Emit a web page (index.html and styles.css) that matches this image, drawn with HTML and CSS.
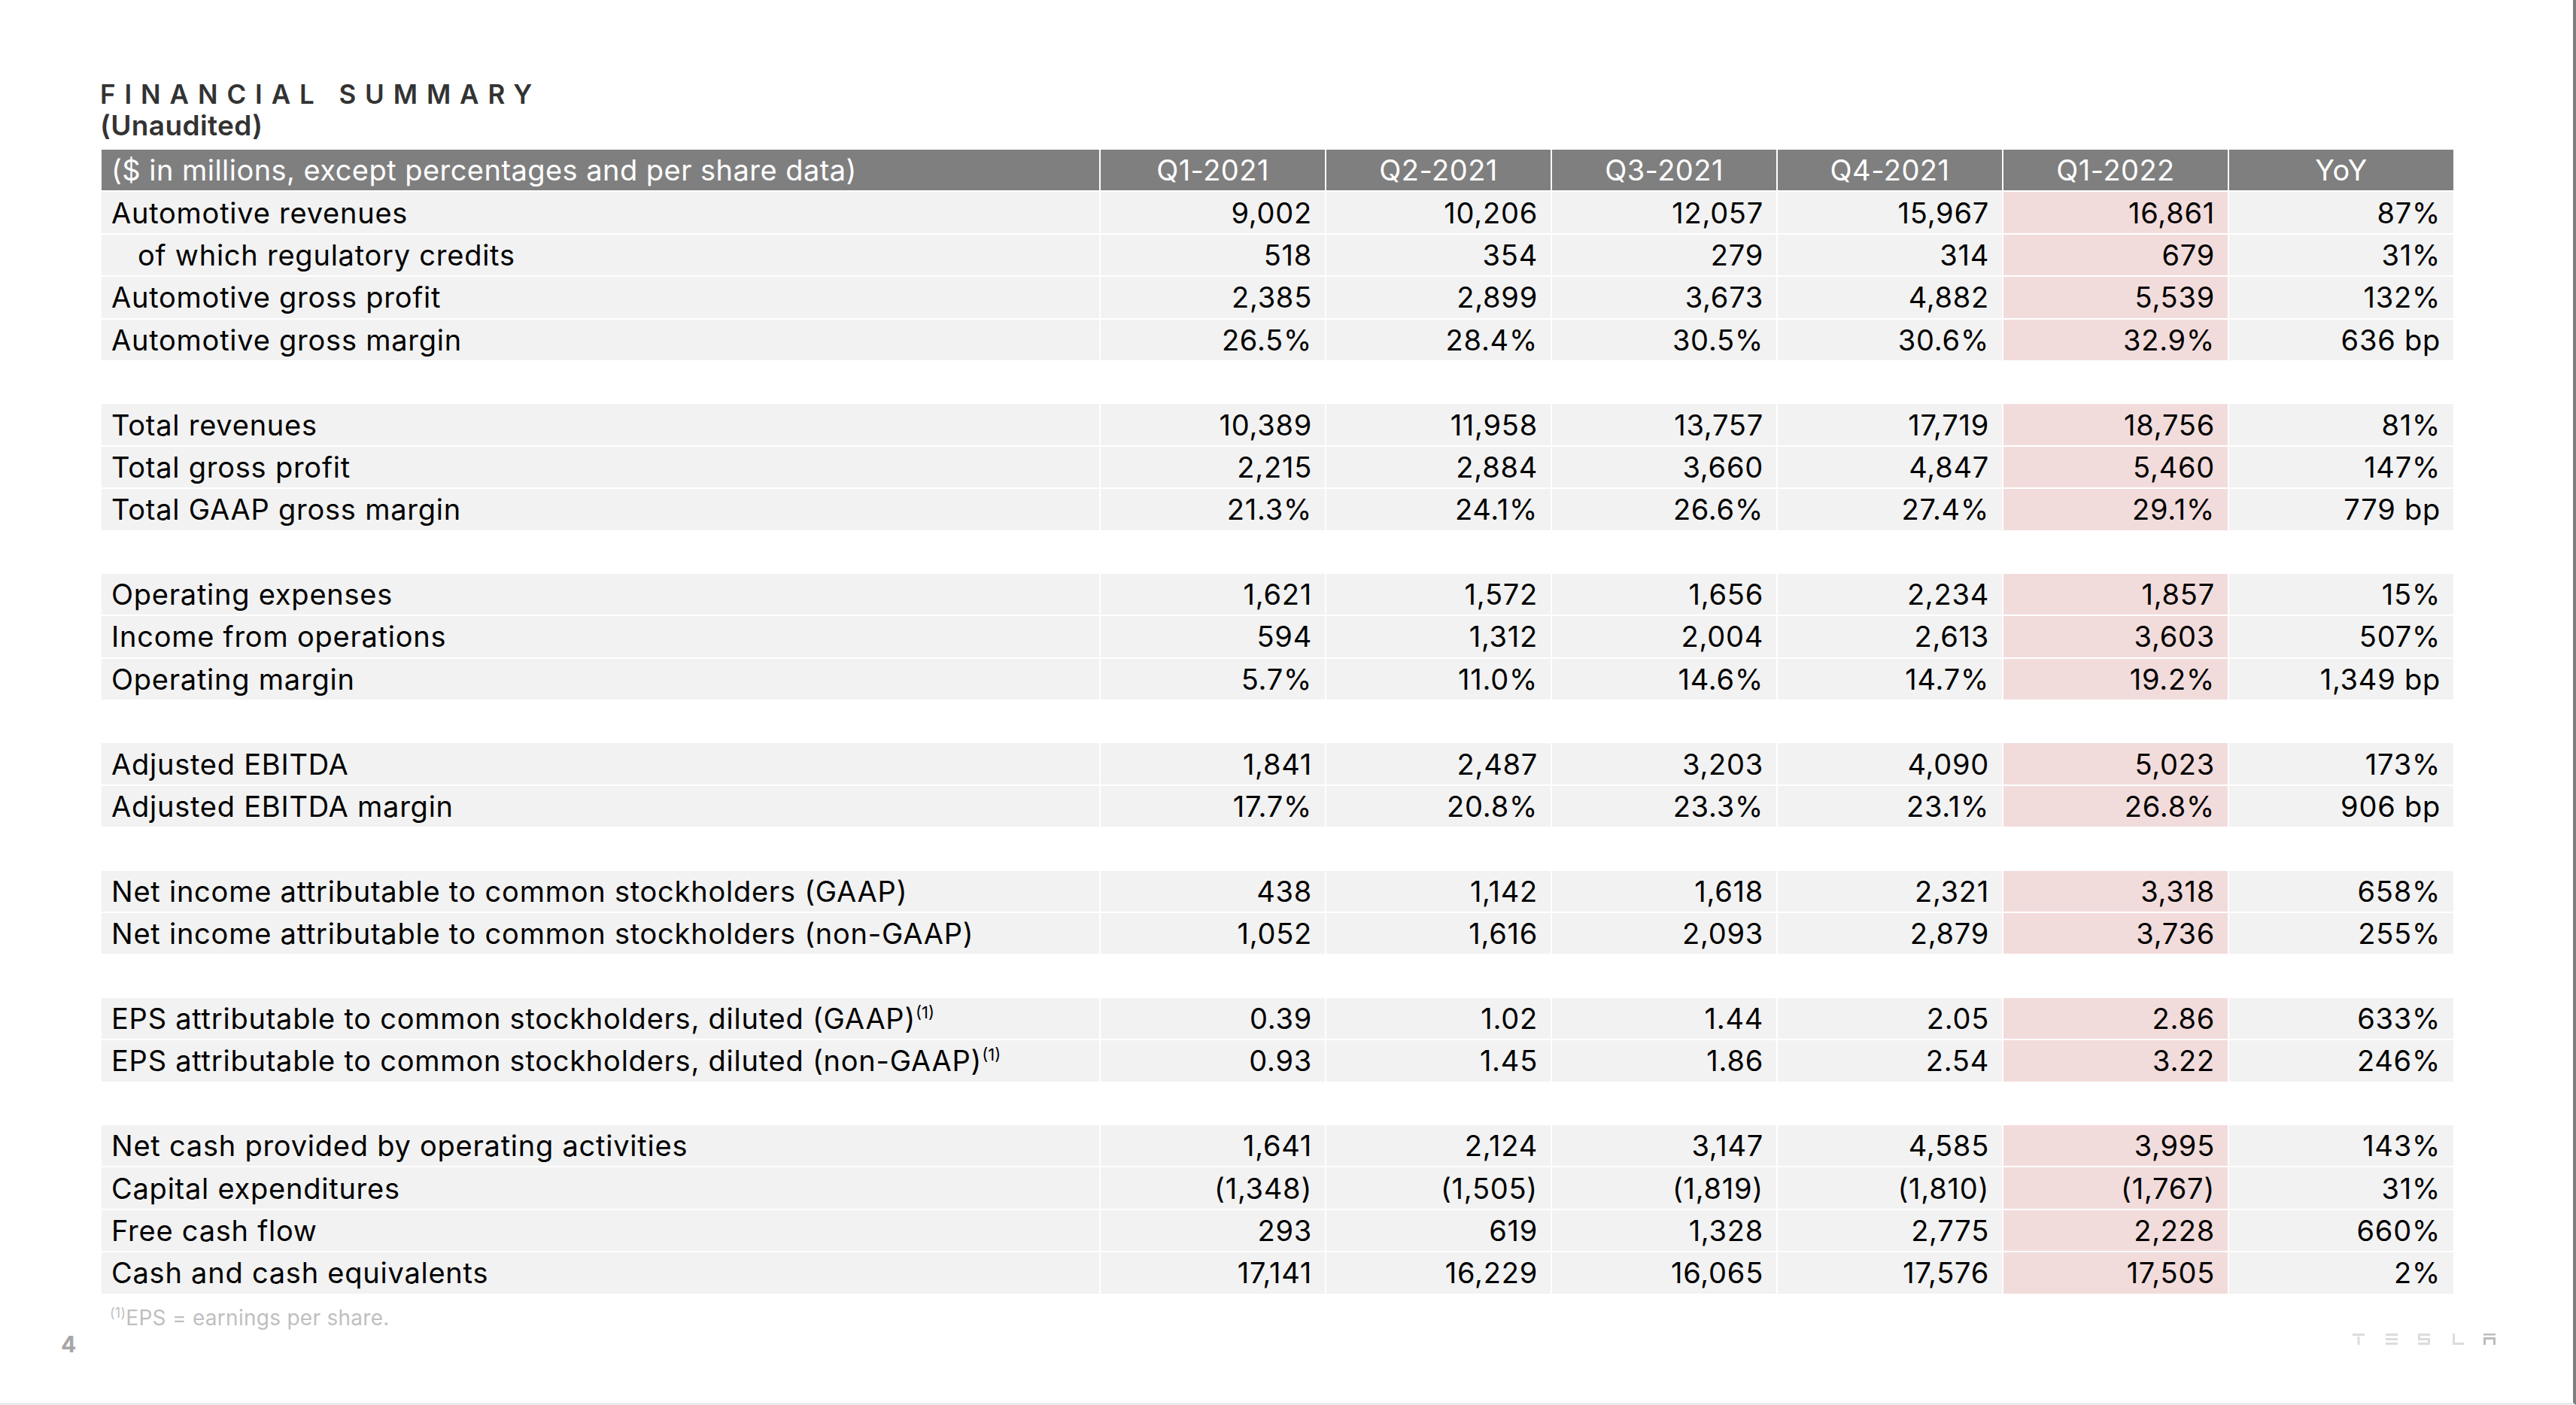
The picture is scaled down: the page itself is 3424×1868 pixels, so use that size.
FILE: index.html
```html
<!DOCTYPE html>
<html lang="en">
<head>
<meta charset="utf-8">
<title>Financial Summary</title>
<link rel="stylesheet" href="styles.css">
</head>
<body>
<div class="slide">
  <main class="main">
    <h1 class="title">FINANCIAL SUMMARY</h1>
    <div class="subtitle">(Unaudited)</div>

    <div class="table">
      <div class="row head">
        <div class="cell label">($ in millions, except percentages and per share data)</div>
        <div class="cell">Q1-2021</div>
        <div class="cell">Q2-2021</div>
        <div class="cell">Q3-2021</div>
        <div class="cell">Q4-2021</div>
        <div class="cell">Q1-2022</div>
        <div class="cell">YoY</div>
      </div>

      <div class="row"><div class="cell label">Automotive revenues</div><div class="cell">9,002</div><div class="cell">10,206</div><div class="cell">12,057</div><div class="cell">15,967</div><div class="cell hl">16,861</div><div class="cell">87%</div></div>
      <div class="row"><div class="cell label indent">of which regulatory credits</div><div class="cell">518</div><div class="cell">354</div><div class="cell">279</div><div class="cell">314</div><div class="cell hl">679</div><div class="cell">31%</div></div>
      <div class="row"><div class="cell label">Automotive gross profit</div><div class="cell">2,385</div><div class="cell">2,899</div><div class="cell">3,673</div><div class="cell">4,882</div><div class="cell hl">5,539</div><div class="cell">132%</div></div>
      <div class="row"><div class="cell label">Automotive gross margin</div><div class="cell">26.5%</div><div class="cell">28.4%</div><div class="cell">30.5%</div><div class="cell">30.6%</div><div class="cell hl">32.9%</div><div class="cell">636 bp</div></div>
      <div class="row spacer"></div>

      <div class="row"><div class="cell label">Total revenues</div><div class="cell">10,389</div><div class="cell">11,958</div><div class="cell">13,757</div><div class="cell">17,719</div><div class="cell hl">18,756</div><div class="cell">81%</div></div>
      <div class="row"><div class="cell label">Total gross profit</div><div class="cell">2,215</div><div class="cell">2,884</div><div class="cell">3,660</div><div class="cell">4,847</div><div class="cell hl">5,460</div><div class="cell">147%</div></div>
      <div class="row"><div class="cell label">Total GAAP gross margin</div><div class="cell">21.3%</div><div class="cell">24.1%</div><div class="cell">26.6%</div><div class="cell">27.4%</div><div class="cell hl">29.1%</div><div class="cell">779 bp</div></div>
      <div class="row spacer"></div>

      <div class="row"><div class="cell label">Operating expenses</div><div class="cell">1,621</div><div class="cell">1,572</div><div class="cell">1,656</div><div class="cell">2,234</div><div class="cell hl">1,857</div><div class="cell">15%</div></div>
      <div class="row"><div class="cell label">Income from operations</div><div class="cell">594</div><div class="cell">1,312</div><div class="cell">2,004</div><div class="cell">2,613</div><div class="cell hl">3,603</div><div class="cell">507%</div></div>
      <div class="row"><div class="cell label">Operating margin</div><div class="cell">5.7%</div><div class="cell">11.0%</div><div class="cell">14.6%</div><div class="cell">14.7%</div><div class="cell hl">19.2%</div><div class="cell">1,349 bp</div></div>
      <div class="row spacer"></div>

      <div class="row"><div class="cell label">Adjusted EBITDA</div><div class="cell">1,841</div><div class="cell">2,487</div><div class="cell">3,203</div><div class="cell">4,090</div><div class="cell hl">5,023</div><div class="cell">173%</div></div>
      <div class="row"><div class="cell label">Adjusted EBITDA margin</div><div class="cell">17.7%</div><div class="cell">20.8%</div><div class="cell">23.3%</div><div class="cell">23.1%</div><div class="cell hl">26.8%</div><div class="cell">906 bp</div></div>
      <div class="row spacer"></div>

      <div class="row"><div class="cell label">Net income attributable to common stockholders (GAAP)</div><div class="cell">438</div><div class="cell">1,142</div><div class="cell">1,618</div><div class="cell">2,321</div><div class="cell hl">3,318</div><div class="cell">658%</div></div>
      <div class="row"><div class="cell label">Net income attributable to common stockholders (non-GAAP)</div><div class="cell">1,052</div><div class="cell">1,616</div><div class="cell">2,093</div><div class="cell">2,879</div><div class="cell hl">3,736</div><div class="cell">255%</div></div>
      <div class="row spacer"></div>

      <div class="row"><div class="cell label">EPS attributable to common stockholders, diluted (GAAP)<sup class="sup">(1)</sup></div><div class="cell">0.39</div><div class="cell">1.02</div><div class="cell">1.44</div><div class="cell">2.05</div><div class="cell hl">2.86</div><div class="cell">633%</div></div>
      <div class="row"><div class="cell label">EPS attributable to common stockholders, diluted (non-GAAP)<sup class="sup">(1)</sup></div><div class="cell">0.93</div><div class="cell">1.45</div><div class="cell">1.86</div><div class="cell">2.54</div><div class="cell hl">3.22</div><div class="cell">246%</div></div>
      <div class="row spacer"></div>

      <div class="row"><div class="cell label">Net cash provided by operating activities</div><div class="cell">1,641</div><div class="cell">2,124</div><div class="cell">3,147</div><div class="cell">4,585</div><div class="cell hl">3,995</div><div class="cell">143%</div></div>
      <div class="row"><div class="cell label">Capital expenditures</div><div class="cell">(1,348)</div><div class="cell">(1,505)</div><div class="cell">(1,819)</div><div class="cell">(1,810)</div><div class="cell hl">(1,767)</div><div class="cell">31%</div></div>
      <div class="row"><div class="cell label">Free cash flow</div><div class="cell">293</div><div class="cell">619</div><div class="cell">1,328</div><div class="cell">2,775</div><div class="cell hl">2,228</div><div class="cell">660%</div></div>
      <div class="row"><div class="cell label">Cash and cash equivalents</div><div class="cell">17,141</div><div class="cell">16,229</div><div class="cell">16,065</div><div class="cell">17,576</div><div class="cell hl">17,505</div><div class="cell">2%</div></div>
    </div>

    <p class="footnote"><sup class="fn-sup">(1)</sup>EPS = earnings per share.</p>
  </main>

  <footer class="footer">
    <span class="page-num">4</span>
    <svg class="logo" width="192" height="15" viewBox="0 0 192 15" aria-label="TESLA">
      <g fill="#dcdcdc">
        <rect x="0" y="0" width="16" height="3"/>
        <rect x="6.5" y="4" width="3" height="11"/>
        <rect x="44" y="0" width="16" height="3"/>
        <rect x="44" y="6" width="16" height="3"/>
        <rect x="44" y="12" width="16" height="3"/>
        <path d="M87 0h16v3H90v3h13v9H87v-3h13V9H87z"/>
        <rect x="133" y="0" width="3" height="15"/>
        <rect x="133" y="12" width="15" height="3"/>
      </g>
      <g fill="#bcbcbc">
        <rect x="174" y="0" width="16" height="2.5"/>
        <path d="M174 5h16v10h-3V8h-10v7h-3z"/>
      </g>
    </svg>
  </footer>
</div>
</body>
</html>
```

FILE: styles.css
```css
* { box-sizing: border-box; }

html, body {
  margin: 0;
  padding: 0;
  background: #ffffff;
}

.slide {
  width: 3424px;
  height: 1868px;
  border-right: 4px solid #7f7f7f;
  border-bottom: 3px solid #ebebeb;
  overflow: hidden;
  font-family: "Inter", "Liberation Sans", sans-serif;
  color: #000;
  display: flex;
  flex-direction: column;
}

.main {
  padding: 105px 0 0 133px;
}

.title {
  margin: 0;
  font-size: 35px;
  line-height: 40px;
  font-weight: 600;
  letter-spacing: 0.34em;
  color: #333333;
}

.subtitle {
  font-size: 37px;
  line-height: 44px;
  font-weight: 600;
  color: #333333;
  letter-spacing: 0.01em;
}

.table {
  margin: 10px 0 0 2px;
  display: flex;
  flex-direction: column;
  gap: 2px;
}

.row {
  display: grid;
  grid-template-columns: 1326px repeat(6, 298px);
  column-gap: 2px;
  height: 54.4px;
}

.cell {
  background: #f2f2f2;
  font-size: 38px;
  letter-spacing: 0.02em;
  display: flex;
  align-items: center;
  justify-content: flex-end;
  padding: 0 17px 0 0;
  white-space: nowrap;
}

.cell.label {
  justify-content: flex-start;
  padding: 0 0 0 13px;
}

.cell.label.indent {
  padding-left: 48px;
}

.cell.hl {
  background: #f2dcdb;
}

.row.head .cell {
  background: #7f7f7f;
  color: #ffffff;
  justify-content: center;
  padding: 0;
  letter-spacing: 0.012em;
}

.row.head .cell.label {
  justify-content: flex-start;
  padding-left: 13px;
}

.sup {
  font-size: 22px;
  align-self: flex-start;
  margin-top: 6px;
  letter-spacing: 0;
}

.footnote {
  margin: 15px 0 0 13px;
  font-size: 28px;
  line-height: 34px;
  color: #bfbfbf;
  letter-spacing: 0.01em;
}

.fn-sup {
  font-size: 18px;
  vertical-align: 10px;
  line-height: 0;
}

.footer {
  display: flex;
  align-items: center;
  justify-content: space-between;
  padding: 0 101px 0 81px;
  height: 36px;
}

.page-num {
  font-size: 30px;
  font-weight: 700;
  color: #a6a6a6;
  line-height: 36px;
}

.logo {
  display: block;
  margin-bottom: 12px;
}
```
